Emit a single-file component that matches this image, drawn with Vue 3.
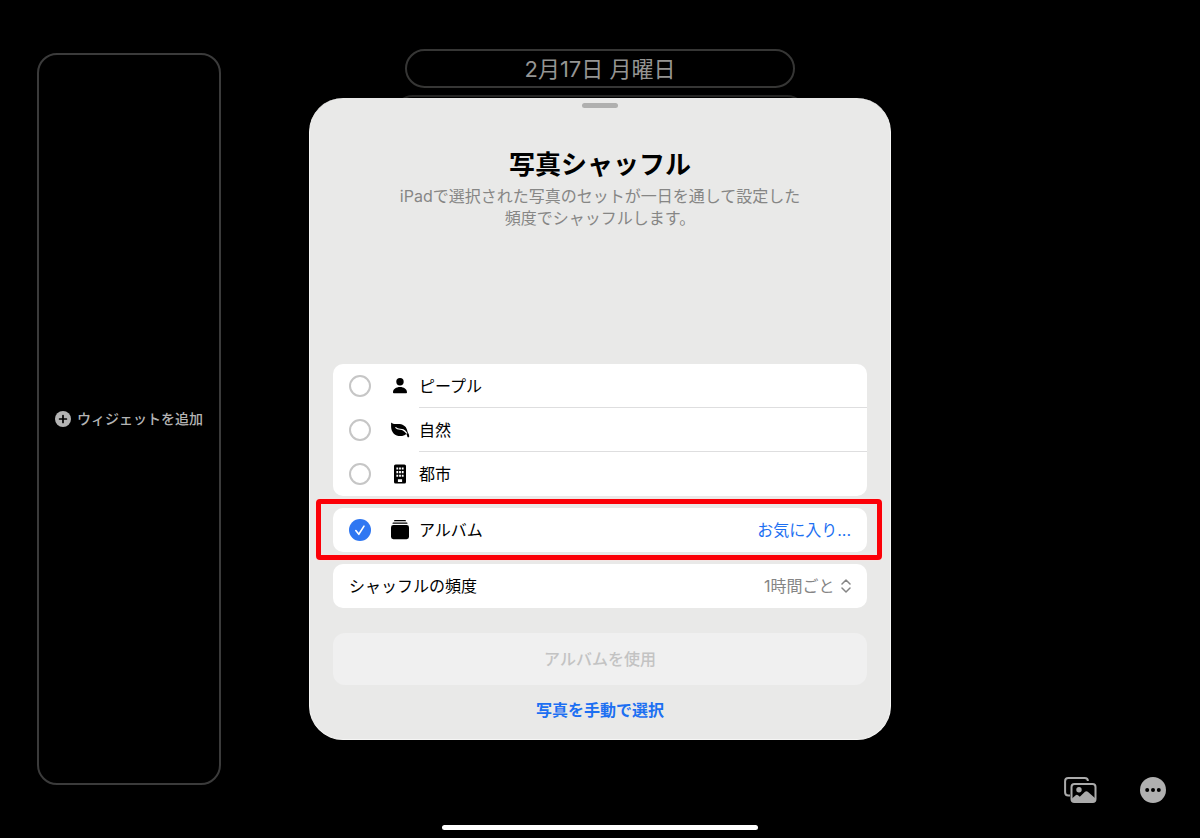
<template>
  <div class="screen">
    <div class="main">
      <div class="side">
        <button class="widget-area" type="button">
          <svg class="plus" viewBox="0 0 16 16">
            <circle cx="8" cy="8" r="8" fill="#b4b4b4" />
            <path d="M8 4.6v6.8M4.6 8h6.8" stroke="#000" stroke-width="1.7" stroke-linecap="round" />
          </svg>
          <span>ウィジェットを追加</span>
        </button>
      </div>

      <div class="center">
        <button class="date" type="button">2月17日 月曜日</button>
        <div class="sheet-wrap">
          <div class="clock-frame"></div>
          <section class="sheet">
            <div class="grabber"></div>
            <h1>写真シャッフル</h1>
            <p class="desc">iPadで選択された写真のセットが一日を通して設定した<br>頻度でシャッフルします。</p>

            <div class="group">
              <label v-for="item in categories" :key="item.id" class="row">
                <span class="check">
                  <input v-model="selected" type="radio" name="source" :value="item.id">
                  <svg v-if="selected === item.id" viewBox="0 0 22 22">
                    <path d="M6.8 11.6l3 3.7 5.2-8.2" />
                  </svg>
                </span>
                <svg v-if="item.id === 'people'" class="icon" viewBox="0 0 20 20">
                  <circle cx="10" cy="5.800" r="3.700" />
                  <path d="M3 16.200c0-3.200 3.200-5.300 7-5.300s7 2.100 7 5.300c0 .8-.4 1.100-1.200 1.100H4.200c-.8 0-1.200-.3-1.200-1.100z" />
                </svg>
                <svg v-else-if="item.id === 'nature'" class="icon" viewBox="0 0 20 20">
                  <path d="M1.100 3.200c0-.5.4-.6.8-.3C3.300 4 5.200 4 8 4c4.600 0 7.800 1.900 8.900 5.500.5 1.600.6 2.600 1.200 3.500.7 1 1.100 1.900 1.100 3.400 0 1.200-1.600 1.200-1.900 0-.3-1.300-.6-1.900-1.200-2.300-1.400 1.500-3.300 2-5.600 2C5 16.100 1.400 12.600 1.100 7z" />
                  <path d="M5.800 7.600c1.800 2 5.200 1.300 7.300 2.300 1.500.7 2.500 1.800 3.600 3.300" fill="none" stroke="#fff" stroke-width="1.200" stroke-linecap="round" />
                </svg>
                <svg v-else class="icon" viewBox="0 0 20 20">
                  <rect x="4" y="0.500" width="12" height="19" rx="1.600" />
                  <path d="M6.400 3.500h1.800v2.100H6.400zM9.100 3.500h1.800v2.100H9.100zM11.800 3.500h1.800v2.100h-1.800zM6.400 7.100h1.800v2.100H6.400zM9.100 7.100h1.800v2.100H9.100zM11.800 7.100h1.800v2.100h-1.800zM6.400 10.700h1.800v2.100H6.400zM9.100 10.700h1.800v2.100H9.100zM11.800 10.700h1.800v2.100h-1.800zM7.900 15.200h4.200v2.800H7.900z" fill="#fff" />
                </svg>
                <span>{{ item.name }}</span>
              </label>
            </div>

            <div class="group">
              <div class="row">
                <label class="album-label">
                  <span class="check">
                    <input v-model="selected" type="radio" name="source" value="album">
                    <svg v-if="selected === 'album'" viewBox="0 0 22 22">
                      <path d="M6.800 11.600l3 3.700 5.200-8.200" />
                    </svg>
                  </span>
                  <svg class="icon" viewBox="0 0 20 20">
                    <path d="M4.800 0h10.400c.5 0 .8.400.8 1.200H4C4 .4 4.300 0 4.800 0zM3.400 2.500h13.200c.6 0 .9.500.9 1.300h-15c0-.8.300-1.300.9-1.300z" />
                    <rect x="1" y="5" width="18" height="14.200" rx="2.400" />
                  </svg>
                  <span>アルバム</span>
                </label>
                <button class="favorite" type="button">お気に入り...</button>
              </div>
              <div class="highlight"></div>
            </div>

            <div class="group">
              <div class="row">
                <label for="frequency">シャッフルの頻度</label>
                <span class="picker">
                  <select id="frequency" v-model="frequency">
                    <option v-for="f in frequencies" :key="f">{{ f }}</option>
                  </select>
                  <svg viewBox="0 0 10 14">
                    <path d="M1 5l4-4 4 4M1 9l4 4 4-4" />
                  </svg>
                </span>
              </div>
            </div>

            <button class="use" type="button" disabled>アルバムを使用</button>
            <a class="manual" href="#">写真を手動で選択</a>
          </section>
        </div>
      </div>

      <div class="side tools">
        <button class="tool" type="button" aria-label="写真">
          <svg width="33" height="26" viewBox="0 0 33 26">
            <path d="M6 18.500H4.300c-2 0-3.200-1.200-3.200-3.200V4.300c0-2 1.200-3.200 3.200-3.200h16.400c2 0 3.200 1.100 3.200 3" fill="none" stroke="#ababab" stroke-width="2" />
            <rect x="7.500" y="7" width="24" height="18" rx="3" fill="none" stroke="#ababab" stroke-width="2" />
            <circle cx="15" cy="12.700" r="2.700" fill="#ababab" />
            <path d="M8 21.500l3.700-3.300c.8-.7 1.500-.7 2.300 0l1.800 1.600 5.200-5c.9-.9 1.900-.9 2.800 0l7.700 6.700v1.500c0 1.500-.8 2.300-2.300 2.300H10.300C8.800 25.300 8 24.500 8 23z" fill="#ababab" />
          </svg>
        </button>
        <button class="tool" type="button" aria-label="その他">
          <svg width="26" height="26" viewBox="0 0 26 26">
            <circle cx="13" cy="13" r="13" fill="#b0b0b0" />
            <circle cx="7.200" cy="13" r="2" />
            <circle cx="13" cy="13" r="2" />
            <circle cx="18.800" cy="13" r="2" />
          </svg>
        </button>
      </div>
    </div>
    <div class="home-bar"></div>
  </div>
</template>

<script setup>
import { ref } from 'vue';

const categories = [
  { id: 'people', name: 'ピープル' },
  { id: 'nature', name: '自然' },
  { id: 'city', name: '都市' }
];

const frequencies = ['1時間ごと', '1日ごと'];

const selected = ref('album');
const frequency = ref('1時間ごと');
</script>

<style>
body {
  background: #000;
}
</style>

<style scoped>
.screen {
  min-height: 100vh;
  box-sizing: border-box;
  padding-bottom: 8px;
  display: flex;
  flex-direction: column;
  align-items: center;
  background: #000;
  font-family: Inter, "Noto Sans CJK JP", sans-serif;
  font-size: 16px;
  line-height: 22px;
}

button,
select {
  font: inherit;
  margin: 0;
  padding: 0;
  border: none;
  background: none;
  cursor: pointer;
}

svg {
  display: block;
  flex: none;
}

.main {
  flex: 1;
  align-self: stretch;
  display: grid;
  grid-template-columns: minmax(0, 1fr) minmax(0, 582px) minmax(0, 1fr);
}

.side {
  display: flex;
  padding: 53px 34px 18px 37px;
}

.widget-area {
  width: 184px;
  box-sizing: border-box;
  display: flex;
  align-items: center;
  justify-content: center;
  gap: 6px;
  border: 2px solid #3b3b3b;
  border-radius: 20px;
  color: #b4b4b4;
  font-size: 14px;
  font-weight: 500;
  white-space: nowrap;
}

.plus {
  width: 16px;
  height: 16px;
}

.center {
  display: flex;
  flex-direction: column;
  align-items: center;
  padding-top: 49px;
}

.date {
  width: 67%;
  height: 39px;
  border: 2px solid #363635;
  border-radius: 20px;
  color: #959593;
  font-size: 22px;
}

.sheet-wrap {
  position: relative;
  align-self: stretch;
  margin-top: 10px;
}

/* top edge of the clock frame that sits behind the sheet */
.clock-frame {
  position: absolute;
  top: -3px;
  left: 84px;
  right: 84px;
  height: 60px;
  border: 2px solid #252524;
  border-radius: 20px;
}

.sheet {
  position: relative;
  box-sizing: border-box;
  display: flex;
  flex-direction: column;
  padding: 5px 23px 18px;
  border: 1px solid #f6f6f5;
  border-top-width: 0;
  border-radius: 34px;
  background: #e9e9e8;
  color: #000;
}

.grabber {
  align-self: center;
  width: 36px;
  height: 5px;
  border-radius: 3px;
  background: #b0b0af;
}

h1 {
  margin: 40px 0 0;
  text-align: center;
  font-size: 26px;
  line-height: 34px;
  font-weight: 700;
}

.desc {
  margin: 3px 0 135px;
  text-align: center;
  color: #868685;
}

.group {
  position: relative;
  margin-bottom: 12px;
  border-radius: 10px;
  background: #fff;
}

.row {
  position: relative;
  height: 44px;
  display: flex;
  align-items: center;
  justify-content: space-between;
  padding: 0 16px;
}

label.row {
  justify-content: flex-start;
}

label.row + label.row::before {
  content: '';
  position: absolute;
  top: -1px;
  left: 86px;
  right: 0;
  height: 1px;
  background: #dededf;
}

.album-label {
  display: flex;
  align-items: center;
}

.check {
  display: grid;
  margin-right: 19px;
}

.check input {
  grid-area: 1 / 1;
  appearance: none;
  width: 22px;
  height: 22px;
  margin: 0;
  border: 2px solid #c6c6c6;
  border-radius: 50%;
}

.check input:checked {
  border: none;
  background: #2f77f2;
}

.check svg {
  grid-area: 1 / 1;
  z-index: 1;
  width: 22px;
  height: 22px;
  pointer-events: none;
  fill: none;
  stroke: #fff;
  stroke-width: 1.6;
  stroke-linecap: round;
  stroke-linejoin: round;
}

.icon {
  width: 20px;
  height: 20px;
  margin-right: 9px;
}

.favorite {
  color: #1d70f2;
}

.highlight {
  position: absolute;
  inset: -9px -15px -8px -17px;
  border: 5px solid #fb0007;
  border-radius: 4px;
  box-shadow: 0 0 1px 1px #f3e5e4;
  pointer-events: none;
}

.picker {
  display: flex;
  align-items: center;
  gap: 6px;
}

.picker select {
  appearance: none;
  color: #858585;
}

.picker svg {
  width: 10px;
  height: 14px;
  fill: none;
  stroke: #858585;
  stroke-width: 1.5;
  stroke-linecap: round;
  stroke-linejoin: round;
}

.use {
  height: 52px;
  margin-top: 13px;
  border-radius: 12px;
  background: #f0f0f0;
  color: #c3c3c3;
  font-weight: 500;
  cursor: default;
}

.manual {
  align-self: center;
  margin-top: 14px;
  color: #1d70f2;
  font-weight: 600;
  text-decoration: none;
}

.tools {
  align-items: flex-end;
  justify-content: flex-end;
  gap: 43px;
  padding-bottom: 0;
}

.home-bar {
  width: 316px;
  height: 5px;
  margin-top: 22px;
  border-radius: 3px;
  background: #fff;
}
</style>
